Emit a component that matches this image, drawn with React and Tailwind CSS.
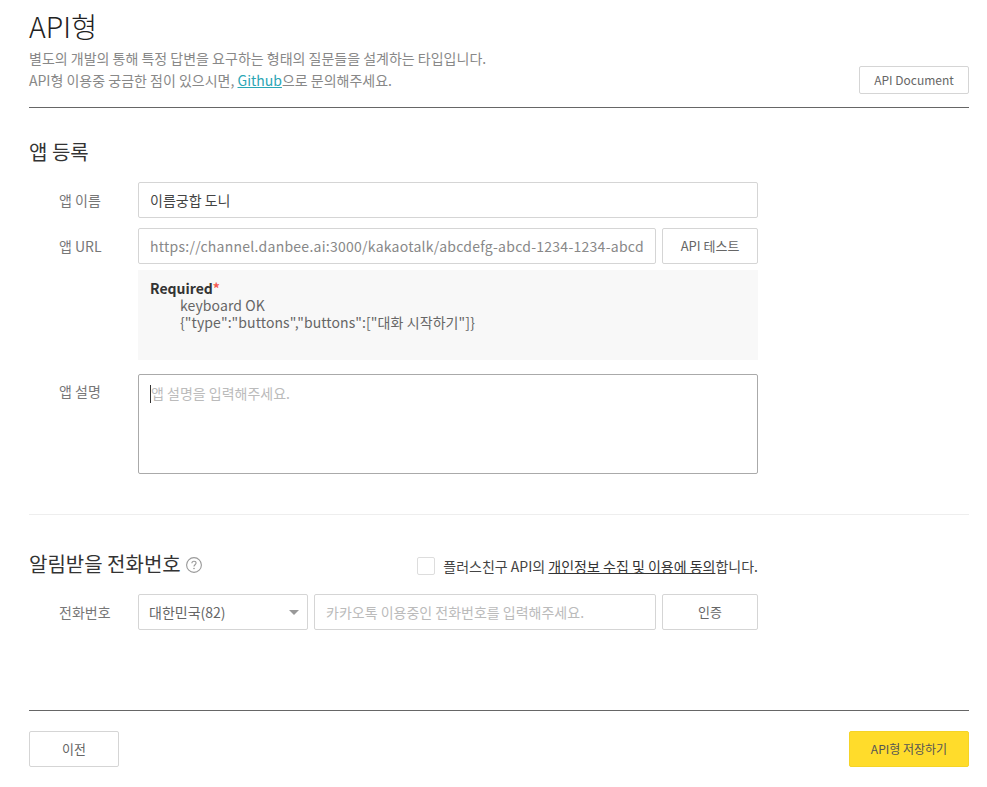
import React from "react";

const FONT = "font-['Noto_Sans_CJK_KR','Noto_Sans',sans-serif]";

const Label = ({ children, className = "" }) => (
  <label className={`w-[109px] pl-[30px] shrink-0 text-sm text-[#777] ${className}`}>{children}</label>
);

const inputClass =
  "h-9 border border-[#d5d5d5] rounded-[2px] px-[11px] text-sm bg-white outline-none placeholder:text-[#bbb]";

const Btn = ({ children, className = "" }) => (
  <button className={`border border-[#d5d5d5] rounded-[2px] bg-white text-[#666] ${className}`}>
    {children}
  </button>
);

const App = () => {
  return (
    <div className={`${FONT} w-[987px] h-[787px] overflow-hidden bg-white px-[29px] pr-[18px] text-[#333]`}>
      {/* header */}
      <div className="flex items-end justify-between h-[108px] border-b border-[#666] pb-[13px]">
        <div className="mb-[3px]">
          <h1 className="text-[28.5px] leading-[40px] mb-[1px] font-light text-[#222]">API형</h1>
          <p className="text-sm leading-[22px] text-[#888]">
            별도의 개발의 통해 특정 답변을 요구하는 형태의 질문들을 설계하는 타입입니다.
            <br />
            API형 이용중 궁금한 점이 있으시면,{" "}
            <a href="#" className="text-[#2ba6b5] underline">Github</a>으로 문의해주세요.
          </p>
        </div>
        <Btn className="w-[110px] h-[28px] text-xs">API Document</Btn>
      </div>

      {/* app info */}
      <h2 className="text-[20px] leading-[28px] mt-[30px] text-[#333]">앱 등록</h2>

      <div className="flex items-center mt-4">
        <Label>앱 이름</Label>
        <input className={`${inputClass} w-[620px] text-[#444]`} defaultValue="이름궁합 도니" />
      </div>

      <div className="flex items-center mt-[10px]">
        <Label>앱 URL</Label>
        <input
          className={`${inputClass} w-[518px] text-[#888] tracking-[0.26px]`}
          defaultValue="https://channel.danbee.ai:3000/kakaotalk/abcdefg-abcd-1234-1234-abcd"
        />
        <Btn className="w-[96px] h-9 ml-[6px] text-[13px]">API 테스트</Btn>
      </div>

      <div className="ml-[109px] mt-[6px] w-[620px] h-[90px] bg-[#f8f8f8] pl-3 pt-[10px] text-sm leading-[17px] text-[#666]">
        <strong className="font-bold text-[#333]">
          Required<span className="text-[#f5574e]">*</span>
        </strong>
        <div className="pl-[30px] tracking-[0.09px]">
          keyboard OK
          <br />
          {'{"type":"buttons","buttons":["대화 시작하기"]}'}
        </div>
      </div>

      <div className="flex items-start mt-[14px]">
        <Label className="pt-[7px]">앱 설명</Label>
        <div className="relative">
          <textarea
            className="block w-[620px] h-[100px] border border-[#aaa] rounded-[2px] px-3 py-[7px] text-sm leading-[22px] outline-none resize-none placeholder:text-[#bbb]"
            placeholder="앱 설명을 입력해주세요."
          />
          <span className="absolute left-3 top-[11px] w-px h-[18px] bg-[#333]" />
        </div>
      </div>

      <div className="border-t border-[#eee] mt-10" />

      {/* phone number */}
      <div className="flex items-center justify-between w-[729px] mt-[35px] h-7">
        <h2 className="flex items-center text-[20px] text-[#333]">
          알림받을 전화번호
          <svg width="16" height="16" viewBox="0 0 16 16" className="ml-[5px] mt-[1px]" fill="none">
            <circle cx="8" cy="8" r="7.4" stroke="#999" strokeWidth="1.1" />
            <path d="M5.9 6.2c0-1.2 1-2 2.1-2s2.1.8 2.1 1.9c0 1.6-2.1 1.7-2.1 3.3" stroke="#999" strokeWidth="1.1" />
            <circle cx="8" cy="11.5" r=".8" fill="#999" />
          </svg>
        </h2>
        <label className="flex items-center text-sm text-[#444] pt-[4px]">
          <span className="w-[18px] h-[18px] border border-[#ddd] rounded-[2px] mr-[8px]" />
          <span>
            플러스친구 API의 <a href="#" className="underline text-[#333]">개인정보 수집 및 이용에 동의</a>합니다.
          </span>
        </label>
      </div>

      <div className="flex items-center mt-[16px]">
        <Label>전화번호</Label>
        <div className="relative w-[170px] h-9 border border-[#d5d5d5] rounded-[2px] pl-[10px] text-sm leading-[34px] text-[#666]">
          대한민국(82)
          <span className="absolute right-[8px] top-[15px] border-x-[5px] border-x-transparent border-t-[5px] border-t-[#999]" />
        </div>
        <input
          className={`${inputClass} w-[342px] ml-[6px]`}
          placeholder="카카오톡 이용중인 전화번호를 입력해주세요."
        />
        <Btn className="w-[96px] h-9 ml-[6px] text-[13px]">인증</Btn>
      </div>

      {/* footer */}
      <div className="flex justify-between border-t border-[#666] mt-20 pt-5">
        <Btn className="w-[90px] h-9 text-[13px]">이전</Btn>
        <button className="w-[120px] h-9 rounded-[2px] bg-[#ffdc2b] border border-[#f5d426] text-xs text-[#555]">
          API형 저장하기
        </button>
      </div>
    </div>
  );
};

export default App;
